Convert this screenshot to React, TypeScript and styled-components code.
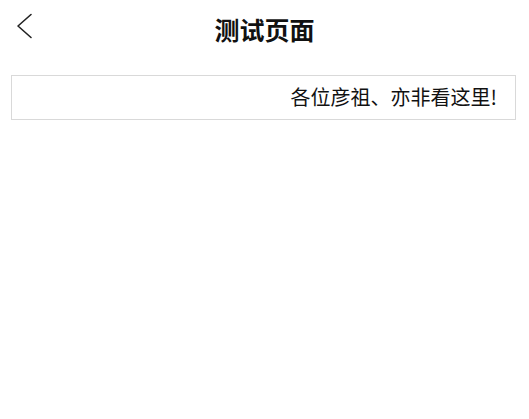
import React from "react";
import styled, { createGlobalStyle } from "styled-components";

const Global = createGlobalStyle`
  html, body { margin: 0; padding: 0; background: #ffffff; }
  body { font-family: "Noto Sans CJK SC", "Noto Sans", sans-serif; color: #111; }
`;

const Page = styled.div`
  display: flex;
  flex-direction: column;
  width: 529px;
`;

const Header = styled.header`
  position: relative;
  height: 59px;
  display: flex;
  align-items: center;
  justify-content: center;
`;

const BackButton = styled.button`
  position: absolute;
  left: 14px;
  top: 11px;
  width: 22px;
  height: 30px;
  padding: 0;
  border: none;
  background: transparent;
  display: flex;
  align-items: center;
  justify-content: center;
  cursor: pointer;
`;

const Title = styled.h1`
  margin: 0;
  font-size: 25px;
  font-weight: 700;
  line-height: 1;
  color: #111;
  letter-spacing: 0;
`;

const NoticeBox = styled.div`
  margin: 16px 13px 0 11px;
  height: 45px;
  box-sizing: border-box;
  border: 1px solid #d9d9d9;
  display: flex;
  align-items: center;
  justify-content: flex-end;
  padding: 0 18px 2px 0;
`;

const NoticeText = styled.span`
  font-size: 20px;
  line-height: 1;
  color: #111;
`;

export default function App() {
  return (
    <>
      <Global />
      <Page>
        <Header>
          <BackButton aria-label="返回">
            <svg width="22" height="30" viewBox="0 0 22 30" fill="none">
              <path d="M17 3.5 L4 15 L17 26.5" stroke="#222" strokeWidth="1.6" strokeLinecap="round" strokeLinejoin="round" />
            </svg>
          </BackButton>
          <Title>测试页面</Title>
        </Header>
        <NoticeBox>
          <NoticeText>各位彦祖、亦非看这里!</NoticeText>
        </NoticeBox>
      </Page>
    </>
  );
}
